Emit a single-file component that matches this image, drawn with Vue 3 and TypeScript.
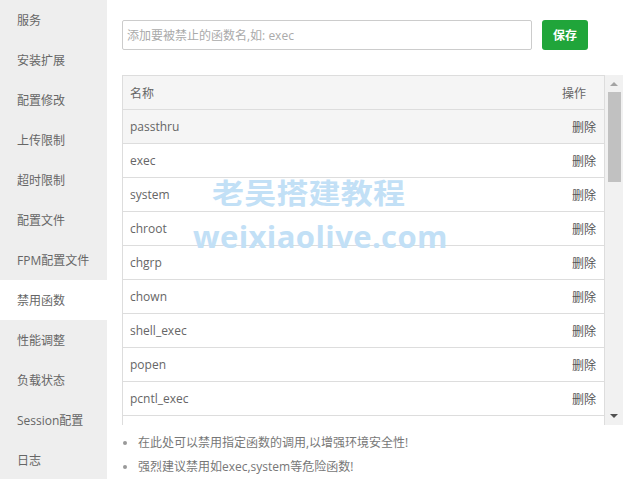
<script setup lang="ts">
const menu: string[] = ['服务', '安装扩展', '配置修改', '上传限制', '超时限制', '配置文件', 'FPM配置文件', '禁用函数', '性能调整', '负载状态', 'Session配置', '日志']
const activeMenu = '禁用函数'
const funcs: string[] = ['passthru', 'exec', 'system', 'chroot', 'chgrp', 'chown', 'shell_exec', 'popen', 'pcntl_exec']
const notes: string[] = ['在此处可以禁用指定函数的调用,以增强环境安全性!', '强烈建议禁用如exec,system等危险函数!']
</script>

<template>
  <div class="page">
    <nav class="side">
      <div v-for="m in menu" :key="m" class="side-item" :class="{ active: m === activeMenu }">{{ m }}</div>
    </nav>
    <main class="main">
      <div class="form">
        <input class="input" type="text" placeholder="添加要被禁止的函数名,如: exec" />
        <button class="save" type="button">保存</button>
      </div>
      <div class="table-box">
        <div class="table-view">
          <div class="row head">
            <span>名称</span>
            <span class="head-op">操作</span>
          </div>
          <div v-for="(f, i) in funcs" :key="f" class="row" :class="{ hover: i === 0 }">
            <span>{{ f }}</span>
            <a class="del">删除</a>
          </div>
        </div>
        <div class="scroll">
          <span class="arrow up"></span>
          <span class="thumb"></span>
          <span class="arrow down"></span>
        </div>
      </div>
      <ul class="notes">
        <li v-for="n in notes" :key="n">{{ n }}</li>
      </ul>
    </main>
    <div class="mark">
      <div class="mark-cn">老吴搭建教程</div>
      <div class="mark-en">weixiaolive.com</div>
    </div>
  </div>
</template>

<style>
html, body { margin: 0; padding: 0; background: #fff; overflow: hidden; }
</style>

<style scoped>
.page {
  position: relative;
  display: flex;
  width: 637px;
  height: 479px;
  overflow: hidden;
  background: #fff;
  font-family: "Open Sans", "Noto Sans CJK SC", sans-serif;
  font-size: 12px;
  color: #666;
}
.side {
  width: 107px;
  flex: none;
  background: #eee;
}
.side-item {
  height: 40px;
  line-height: 42px;
  padding-left: 17px;
  color: #666;
}
.side-item.active { background: #fff; }
.main {
  flex: none;
  width: 500px;
  padding: 20px 0 0 15px;
}
.form {
  display: flex;
  gap: 10px;
}
.input {
  box-sizing: border-box;
  width: 410px;
  height: 30px;
  padding: 0 4px;
  border: 1px solid #ccc;
  border-radius: 2px;
  outline: none;
  font: inherit;
  color: #555;
}
.input::placeholder { color: #aaa; opacity: 1; }
.save {
  width: 46px;
  height: 30px;
  padding: 0;
  border: 0;
  border-radius: 3px;
  background: #20a53a;
  color: #fff;
  font: inherit;
  font-weight: 700;
}
.table-box {
  display: flex;
  width: 500px;
  height: 350px;
  margin-top: 25px;
}
.table-view {
  box-sizing: border-box;
  width: 483px;
  height: 350px;
  flex: none;
  overflow: hidden;
  border: 1px solid #ddd;
  border-bottom: 0;
}
.row {
  box-sizing: border-box;
  display: flex;
  justify-content: space-between;
  align-items: center;
  height: 34px;
  padding: 0 8px 0 7px;
  border-bottom: 1px solid #ddd;
}
.row.head,
.row.hover { background: #f5f5f5; }
.head-op { margin-right: 10px; }
.del { color: #555; }
.scroll {
  width: 18px;
  flex: none;
  display: flex;
  flex-direction: column;
  align-items: center;
  background: #f1f1f1;
}
.thumb {
  width: 13px;
  height: 90px;
  background: #c1c1c1;
}
.arrow {
  width: 0;
  height: 0;
  border-left: 4px solid transparent;
  border-right: 4px solid transparent;
}
.arrow.up {
  margin-top: 7px;
  margin-bottom: 6px;
  border-bottom: 4px solid #a3a3a3;
}
.arrow.down {
  margin-top: auto;
  margin-bottom: 7px;
  border-top: 4px solid #505050;
}
.notes {
  margin: 6px 0 0;
  padding: 0 0 0 16px;
  list-style: none;
}
.notes li {
  position: relative;
  line-height: 24px;
  color: #777;
}
.notes li::before {
  content: "";
  position: absolute;
  left: -15px;
  top: 10px;
  width: 4px;
  height: 4px;
  border-radius: 50%;
  background: #999;
}
.mark {
  position: absolute;
  left: 212px;
  top: 172px;
  color: #c2e0f6;
  pointer-events: none;
  white-space: nowrap;
  font-family: "Noto Sans CJK SC", sans-serif;
  font-weight: 700;
}
.mark-cn {
  font-size: 32px;
  line-height: 40px;
  letter-spacing: 0.2px;
  transform: scaleY(0.88);
}
.mark-en {
  margin: 6px 0 0 -19px;
  font-family: "Open Sans", sans-serif;
  font-weight: 700;
  font-size: 31px;
  line-height: 36px;
  letter-spacing: 0.4px;
}
</style>
